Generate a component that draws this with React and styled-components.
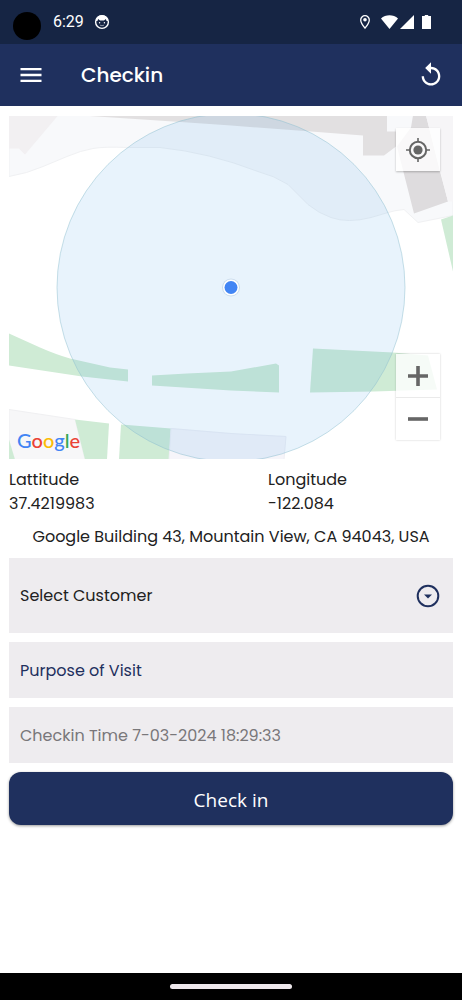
import { useState } from "react";
import styled, { createGlobalStyle } from "styled-components";
import { MdMenu, MdReplay } from "react-icons/md";

const locais = [
    { nome: "Lattitude", valor: "37.4219983" },
    { nome: "Longitude", valor: "-122.084" }
]

const letras = [
    ["G", "#4285F4"],
    ["o", "#EA4335"],
    ["o", "#FBBC05"],
    ["g", "#4285F4"],
    ["l", "#34A853"],
    ["e", "#EA4335"]
]

export default function App() {
    const [purpose, setPurpose] = useState("");

    return (
        <ScreenContainer>
            <GlobalStyle />
            <StatusBar>
                <Camera />
                <Clock>6:29</Clock>
                <FaceIcon />
                <StatusIcons />
            </StatusBar>
            <AppBar>
                <IconButton aria-label="Menu"><MdMenu /></IconButton>
                <h1>Checkin</h1>
                <IconButton aria-label="Reload"><MdReplay /></IconButton>
            </AppBar>
            <Content>
                <MapContainer>
                    <MapDrawing />
                    <GoogleLogo>
                        {letras.map(([l, cor], i) => <Letter key={i} $cor={cor}>{l}</Letter>)}
                    </GoogleLogo>
                    <LocateButton aria-label="My location">
                        <svg width="24" height="24" viewBox="0 0 24 24" fill="none" stroke="#666" strokeWidth="2">
                            <circle cx="12" cy="12" r="8.2" />
                            <circle cx="12" cy="12" r="4.6" fill="#666" stroke="none" />
                            <path d="M12 0v4M12 20v4M0 12h4M20 12h4" strokeWidth="1.6" />
                        </svg>
                    </LocateButton>
                    <ZoomControls>
                        <MapButton aria-label="Zoom in">
                            <svg width="20" height="20" viewBox="0 0 20 20">
                                <path d="M0 10h20M10 0v20" stroke="#666" strokeWidth="3.6" />
                            </svg>
                        </MapButton>
                        <MapButton aria-label="Zoom out">
                            <svg width="20" height="20" viewBox="0 0 20 20">
                                <path d="M0 10h20" stroke="#666" strokeWidth="3.6" />
                            </svg>
                        </MapButton>
                    </ZoomControls>
                </MapContainer>
                <Coordinates>
                    {locais.map((l) =>
                        <div key={l.nome}>
                            <p>{l.nome}</p>
                            <p>{l.valor}</p>
                        </div>
                    )}
                </Coordinates>
                <Address>Google Building 43, Mountain View, CA 94043, USA</Address>
                <SelectBox>
                    <select aria-label="Select Customer">
                        <option>Select Customer</option>
                    </select>
                    <svg width="24" height="24" viewBox="0 0 24 24">
                        <circle cx="12" cy="12" r="10.3" fill="none" stroke="#1F305E" strokeWidth="2" />
                        <path d="M8 10.5h8l-4 4z" fill="#1F305E" />
                    </svg>
                </SelectBox>
                <Field
                    aria-label="Purpose of Visit"
                    placeholder="Purpose of Visit"
                    value={purpose}
                    onChange={(e) => setPurpose(e.target.value)}
                />
                <Field aria-label="Checkin Time" value="Checkin Time 7-03-2024 18:29:33" readOnly />
                <CheckinButton>Check in</CheckinButton>
            </Content>
            <NavigationBar>
                <div />
            </NavigationBar>
        </ScreenContainer>
    );
}

function FaceIcon() {
    return (
        <svg width="16" height="16" viewBox="0 0 16 16">
            <circle cx="8" cy="8" r="6.4" fill="none" stroke="#fff" strokeWidth="1.4" />
            <path d="M1.800 7C2.300 3 5 1.300 8 1.300S13.700 3 14.200 7L12.600 7 11.800 5 10 6.500H6L4.200 5 3.400 7z" fill="#fff" />
            <circle cx="5.600" cy="8.800" r="0.700" fill="#fff" />
            <circle cx="10.400" cy="8.800" r="0.700" fill="#fff" />
            <path d="M6 11.200q2 1 4 0" fill="none" stroke="#fff" strokeWidth="0.500" />
        </svg>
    );
}

function StatusIcons() {
    return (
        <svg width="82" height="16" viewBox="0 0 82 16" fill="#fff">
            <path d="M7 1.700a4.300 4.300 0 0 0-4.300 4.300c0 3 4.300 8.200 4.300 8.200S11.300 9 11.300 6A4.300 4.300 0 0 0 7 1.700z" fill="none" stroke="#fff" strokeWidth="1.300" />
            <circle cx="7" cy="5.800" r="1.800" />
            <path d="M31.500 15L23 4.500C27.500 0.200 35.500 0.200 40 4.500z" />
            <path d="M56 1v14H42z" />
            <path d="M64 2h2.800V1h3.400v1H73v13h-9z" />
        </svg>
    );
}

function MapDrawing() {
    return (
        <svg viewBox="0 0 444 344" preserveAspectRatio="xMidYMid slice">
            {/* campus ground */}
            <path d="M0 0H444V100L409 107 395 94Q385 95 379 97L362 102Q339 108 322 102 310 98 299 89L279 69Q265 60 249 56 200 37 151 32H118Q95 31 84 33 72 35 58 41L34 51Q18 58 0 61z" fill="#F8F9FB" stroke="#F0F1F3" />
            {/* buildings */}
            <path d="M0 0H49L16 39 10 33H0z" fill="#F2F0F2" />
            <path d="M73 0H378V16H387V31L375 40H354V20L302 16 222 10 164 6z" fill="#E2E0E1" />
            <path d="M404 0H417L431 56 439 86 405 98 388 31 402 12z" fill="#DEDCDE" />
            <path d="M417 0H444V86L439 86z" fill="#F6F5F7" />
            <path d="M0 294L66 304 76 344H0z" fill="#F7F7F8" stroke="#F0F0F2" />
            {/* grass */}
            <g fill="#CFEBD5">
                <path d="M0 218L31 232Q47 239 61 243L101 252 119 254V266L73 261 0 250z" />
                <path d="M143 260L178 258 222 256 267 248 270 250V277L222 275 143 270z" />
                <path d="M304 233L384 237 419 240 428 274 365 276 301 277z" />
                <path d="M432 104L444 100V156z" />
                <path d="M66 304L100 308 98 344H76z" />
                <path d="M112 309L162 313 160 344H110z" />
                <path d="M0 324L6 344H0z" />
            </g>
            <path d="M162 313L222 318 277 321 275 344H160z" fill="#F6F5FA" stroke="#EEEEF4" />
            <circle cx="222" cy="172" r="174" fill="#409CE8" fillOpacity="0.120" stroke="#90C0D0" strokeOpacity="0.500" />
            <circle cx="222" cy="172" r="9" fill="#9DB8D8" fillOpacity="0.400" />
            <circle cx="222" cy="172" r="8" fill="#fff" />
            <circle cx="222" cy="172" r="6.500" fill="#4285F4" />
        </svg>
    );
}

const GlobalStyle = createGlobalStyle`
    * {
        box-sizing: border-box;
        margin: 0;
        padding: 0;
    }

    body {
        background-color: #FFFFFF;
        font-family: 'Poppins', 'Inter', sans-serif;
    }

    button, input, select {
        border: none;
        font-family: inherit;
    }
`;

const ScreenContainer = styled.div`
    width: 100%;
    min-height: 100vh;
    display: flex;
    flex-direction: column;
    background-color: #FFFFFF;
`;

const StatusBar = styled.div`
    height: 44px;
    display: flex;
    align-items: center;
    padding: 0 22px 0 13px;
    background-color: #162544;

    svg:last-child {
        margin-left: auto;
    }
`;

const Camera = styled.div`
    width: 28px;
    height: 28px;
    margin-top: 8px;
    border-radius: 50%;
    background-color: #000000;
`;

const Clock = styled.span`
    margin: 0 10px 0 12px;
    font-family: 'Roboto', sans-serif;
    font-size: 16px;
    line-height: 20px;
    color: #FFFFFF;
`;

const AppBar = styled.header`
    height: 62px;
    display: flex;
    align-items: center;
    gap: 36px;
    padding: 0 17px;
    background-color: #1F305E;

    h1 {
        flex: 1;
        font-weight: 500;
        font-size: 20px;
        line-height: 28px;
        color: #FFFFFF;
    }
`;

const IconButton = styled.button`
    display: flex;
    background: none;
    color: #FFFFFF;
    font-size: 28px;
    cursor: pointer;
`;

const Content = styled.main`
    flex: 1;
    display: flex;
    flex-direction: column;
    gap: 9px;
    padding: 10px 9px;
`;

const MapContainer = styled.div`
    position: relative;
    height: 343px;
    overflow: hidden;

    > svg {
        display: block;
        width: 100%;
        height: 100%;
    }
`;

const GoogleLogo = styled.div`
    position: absolute;
    left: 8px;
    bottom: 7px;
    font-family: 'Lato', sans-serif;
    font-weight: 500;
    font-size: 20px;
    line-height: 24px;
`;

const Letter = styled.span`
    color: ${(props) => props.$cor};
`;

const MapButton = styled.button`
    width: 44px;
    height: 43px;
    display: flex;
    align-items: center;
    justify-content: center;
    background-color: rgba(255, 255, 255, 0.8);
    cursor: pointer;
`;

const LocateButton = styled(MapButton)`
    position: absolute;
    top: 12px;
    right: 13px;
    box-shadow: 0 1px 2px rgba(0, 0, 0, 0.25);
`;

const ZoomControls = styled.div`
    position: absolute;
    right: 13px;
    bottom: 19px;
    display: flex;
    flex-direction: column;
    box-shadow: 0 0 2px rgba(0, 0, 0, 0.2);

    button + button {
        border-top: 1px solid #EAEAEA;
    }
`;

const Coordinates = styled.div`
    display: grid;
    grid-template-columns: 7fr 5fr;
    font-size: 16px;
    line-height: 24px;
    color: #212121;
`;

const Address = styled.p`
    font-size: 16px;
    line-height: 24px;
    text-align: center;
    color: #212121;
`;

const SelectBox = styled.div`
    position: relative;
    height: 75px;
    background-color: #EEECEF;

    select {
        appearance: none;
        width: 100%;
        height: 100%;
        padding: 0 48px 0 11px;
        background: none;
        font-size: 16px;
        color: #212121;
    }

    svg {
        position: absolute;
        right: 13px;
        top: calc(50% - 12px);
        pointer-events: none;
    }
`;

const Field = styled.input`
    width: 100%;
    height: 56px;
    padding: 0 11px;
    border-radius: 0;
    background-color: #EEECEF;
    font-size: 16px;
    color: #79777A;

    &::placeholder {
        color: #1F305E;
        opacity: 1;
    }
`;

const CheckinButton = styled.button`
    height: 53px;
    padding-top: 2px;
    border-radius: 12px;
    background-color: #1F305E;
    box-shadow: 0 1px 3px rgba(0, 0, 0, 0.4);
    font-family: 'Open Sans', sans-serif;
    font-size: 19px;
    color: #FFFFFF;
    cursor: pointer;
`;

const NavigationBar = styled.div`
    height: 27px;
    display: flex;
    align-items: center;
    justify-content: center;
    background-color: #000000;

    div {
        width: 122px;
        height: 5px;
        border-radius: 3px;
        background-color: #EEE8EC;
    }
`;
